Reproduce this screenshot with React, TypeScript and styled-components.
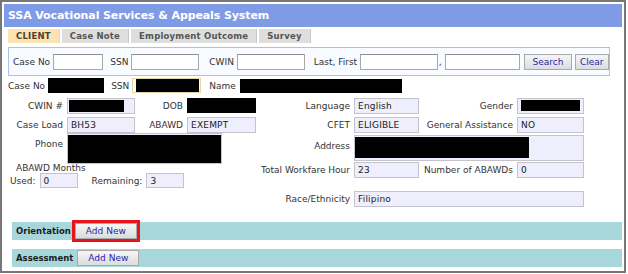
import React from "react";
import styled, { createGlobalStyle } from "styled-components";

const GlobalStyle = createGlobalStyle`
  html, body {
    margin: 0;
    padding: 0;
    background: #fff;
  }
  body {
    font-family: "DejaVu Sans", Verdana, sans-serif;
    font-size: 9px;
    color: #333;
  }
`;

const Frame = styled.div`
  width: 618px;
  border: 2px solid #777;
  padding: 2px 2px 4px;
`;

const TitleBar = styled.div`
  height: 23px;
  line-height: 23px;
  padding-left: 4px;
  background: #809be6;
  color: #fff;
  font-weight: bold;
  font-size: 11px;
  letter-spacing: -0.1px;
`;

const Tabs = styled.div`
  display: flex;
  gap: 2px;
  margin: 2px 0 0 4px;
`;

const Tab = styled.div<{ $active?: boolean }>`
  height: 14px;
  line-height: 14px;
  padding: 0 8px;
  font-weight: bold;
  font-size: 8.5px;
  letter-spacing: 0.2px;
  color: ${(p) => (p.$active ? "#4a4030" : "#555")};
  background: ${(p) => (p.$active ? "#fde3b2" : "#dedede")};
  border-right: 1px solid ${(p) => (p.$active ? "#f0d6a6" : "#c8c8c8")};
`;

const SearchPanel = styled.div`
  display: flex;
  align-items: center;
  width: 596px;
  height: 27px;
  margin: 4px 0 0 4px;
  padding-left: 4px;
  border: 1px solid #a3c4ea;
  background: #f8fbff;
`;

const SearchLabel = styled.span<{ $ml?: number }>`
  margin-left: ${(p) => p.$ml ?? 0}px;
  margin-right: 3px;
  white-space: nowrap;
  color: #333;
`;

const SearchInput = styled.div<{ $w: number }>`
  width: ${(p) => p.$w}px;
  height: 16px;
  box-sizing: border-box;
  border: 1px solid #a8a8a8;
  border-top-color: #8f8f8f;
  background: #fff;
`;

const Button = styled.div<{ $w: number; $ml?: number }>`
  width: ${(p) => p.$w}px;
  height: 16px;
  margin-left: ${(p) => p.$ml ?? 0}px;
  box-sizing: border-box;
  border: 1px solid #a9a9a9;
  background: linear-gradient(#f6f6f6, #dcdcdc);
  color: #2626a6;
  font-size: 9px;
  line-height: 14px;
  text-align: center;
  white-space: nowrap;
`;

const Details = styled.div`
  margin-top: 2px;
  padding-left: 4px;
`;

const TopRow = styled.div`
  display: flex;
  align-items: center;
  height: 15px;
`;

const InlineLabel = styled.span<{ $ml?: number; $mr?: number }>`
  margin-left: ${(p) => p.$ml ?? 0}px;
  margin-right: ${(p) => p.$mr ?? 3}px;
  white-space: nowrap;
`;

const Redact = styled.div<{ $w?: number; $h?: number; $ml?: number }>`
  width: ${(p) => (p.$w ? `${p.$w}px` : "100%")};
  height: ${(p) => (p.$h ? `${p.$h}px` : "100%")};
  margin-left: ${(p) => p.$ml ?? 0}px;
  flex-shrink: 0;
  background: #000;
`;

const SsnBox = styled.div`
  display: flex;
  align-items: center;
  width: 69px;
  height: 15px;
  box-sizing: border-box;
  border: 1px solid #e2d9a6;
  background: #fffbe8;
`;

const Blocks = styled.div`
  display: flex;
  margin-top: 5px;
`;

const LeftBlock = styled.div`
  width: 248px;
`;

const RightBlock = styled.div`
  width: 328px;
`;

const GridRow = styled.div<{ $cols: string; $h?: number; $mt?: number }>`
  display: grid;
  grid-template-columns: ${(p) => p.$cols};
  height: ${(p) => p.$h ?? 16}px;
  margin-top: ${(p) => p.$mt ?? 0}px;
`;

const FieldLabel = styled.div<{ $top?: boolean }>`
  text-align: right;
  padding-right: 4px;
  padding-top: ${(p) => (p.$top ? 3 : 0)}px;
  line-height: 16px;
  white-space: nowrap;
  color: #333;
`;

const Field = styled.div<{ $span?: number; $w?: number; $inset?: number }>`
  display: flex;
  align-items: ${(p) => (p.$inset !== undefined ? "flex-start" : "center")};
  grid-column: span ${(p) => p.$span ?? 1};
  width: ${(p) => (p.$w ? `${p.$w}px` : "auto")};
  height: 100%;
  box-sizing: border-box;
  padding-left: ${(p) => p.$inset ?? 3}px;
  padding-top: ${(p) => (p.$inset !== undefined ? 1 : 0)}px;
  border: 1px solid #c3c3cc;
  background: #eeeefc;
  color: #222;
  letter-spacing: 0.2px;
  white-space: nowrap;
  overflow: hidden;
`;

const Caption = styled.div`
  height: 9px;
  line-height: 9px;
  padding-left: 8px;
`;

const UsedRow = styled.div`
  display: flex;
  align-items: center;
  height: 15px;
  padding-left: 2px;
`;

const SmallField = styled(Field)`
  flex: none;
  width: 38px;
  padding-top: 0;
`;

const Sections = styled.div`
  margin: 16px 0 0 8px;
`;

const SectionBar = styled.div<{ $mt?: number }>`
  display: flex;
  align-items: center;
  height: 18px;
  margin-top: ${(p) => p.$mt ?? 0}px;
  padding-left: 4px;
  background: #a8d7db;
`;

const SectionTitle = styled.span<{ $mr: number }>`
  margin-right: ${(p) => p.$mr}px;
  font-weight: bold;
  font-size: 8.5px;
  color: #1c1c1c;
`;

const Highlight = styled.div`
  display: flex;
  border: 3px solid #e8141c;
`;

export default function App() {
  return (
    <>
      <GlobalStyle />
      <Frame>
        <TitleBar>SSA Vocational Services &amp; Appeals System</TitleBar>
        <Tabs>
          <Tab $active>CLIENT</Tab>
          <Tab>Case Note</Tab>
          <Tab>Employment Outcome</Tab>
          <Tab>Survey</Tab>
        </Tabs>

        <SearchPanel>
          <SearchLabel>Case No</SearchLabel>
          <SearchInput $w={51} />
          <SearchLabel $ml={7}>SSN</SearchLabel>
          <SearchInput $w={69} />
          <SearchLabel $ml={10}>CWIN</SearchLabel>
          <SearchInput $w={69} />
          <SearchLabel $ml={9}>Last, First</SearchLabel>
          <SearchInput $w={79} />
          <SearchLabel $ml={1}>,</SearchLabel>
          <SearchInput $w={77} />
          <Button $w={48} $ml={4}>Search</Button>
          <Button $w={35} $ml={3}>Clear</Button>
        </SearchPanel>

        <Details>
          <TopRow>
            <InlineLabel>Case No</InlineLabel>
            <Redact $w={56} $h={15} />
            <InlineLabel $ml={7}>SSN</InlineLabel>
            <SsnBox>
              <Redact $w={63} $h={13} $ml={3} />
            </SsnBox>
            <InlineLabel $ml={8} $mr={4}>Name</InlineLabel>
            <Redact $w={162} $h={14} />
          </TopRow>

          <Blocks>
            <LeftBlock>
              <GridRow $cols="59px 68px 52px 69px">
                <FieldLabel>CWIN #</FieldLabel>
                <Field $inset={1}>
                  <Redact $w={55} $h={12} />
                </Field>
                <FieldLabel>DOB</FieldLabel>
                <Redact $h={15} />
              </GridRow>
              <GridRow $cols="59px 68px 52px 69px" $mt={3}>
                <FieldLabel>Case Load</FieldLabel>
                <Field>BH53</Field>
                <FieldLabel>ABAWD</FieldLabel>
                <Field>EXEMPT</Field>
              </GridRow>
              <GridRow $cols="59px 68px 52px 69px" $h={31}>
                <FieldLabel $top>Phone</FieldLabel>
                <Field $span={3} $w={155} $inset={0}>
                  <Redact $w={153} $h={30} />
                </Field>
              </GridRow>
              <Caption>ABAWD Months</Caption>
              <UsedRow>
                <InlineLabel $mr={4}>Used:</InlineLabel>
                <SmallField>0</SmallField>
                <InlineLabel $ml={14} $mr={4}>Remaining:</InlineLabel>
                <SmallField>3</SmallField>
              </UsedRow>
            </LeftBlock>

            <RightBlock>
              <GridRow $cols="98px 65px 98px 67px">
                <FieldLabel>Language</FieldLabel>
                <Field>English</Field>
                <FieldLabel>Gender</FieldLabel>
                <Field $inset={3}>
                  <Redact $w={59} $h={11} />
                </Field>
              </GridRow>
              <GridRow $cols="98px 65px 98px 67px" $mt={3}>
                <FieldLabel>CFET</FieldLabel>
                <Field>ELIGIBLE</Field>
                <FieldLabel>General Assistance</FieldLabel>
                <Field>NO</Field>
              </GridRow>
              <GridRow $cols="98px 65px 98px 67px" $mt={2} $h={26}>
                <FieldLabel $top>Address</FieldLabel>
                <Field $span={3} $inset={0}>
                  <Redact $w={174} $h={21} />
                </Field>
              </GridRow>
              <GridRow $cols="98px 65px 98px 67px" $mt={1}>
                <FieldLabel>Total Workfare Hour</FieldLabel>
                <Field>23</Field>
                <FieldLabel>Number of ABAWDs</FieldLabel>
                <Field>0</Field>
              </GridRow>
              <GridRow $cols="98px 65px 98px 67px" $mt={13} $h={15}>
                <FieldLabel>Race/Ethnicity</FieldLabel>
                <Field $span={3}>Filipino</Field>
              </GridRow>
            </RightBlock>
          </Blocks>
        </Details>

        <Sections>
          <SectionBar>
            <SectionTitle $mr={1}>Orientation</SectionTitle>
            <Highlight>
              <Button $w={62}>Add New</Button>
            </Highlight>
          </SectionBar>
          <SectionBar $mt={9}>
            <SectionTitle $mr={4}>Assessment</SectionTitle>
            <Button $w={62}>Add New</Button>
          </SectionBar>
        </Sections>
      </Frame>
    </>
  );
}
